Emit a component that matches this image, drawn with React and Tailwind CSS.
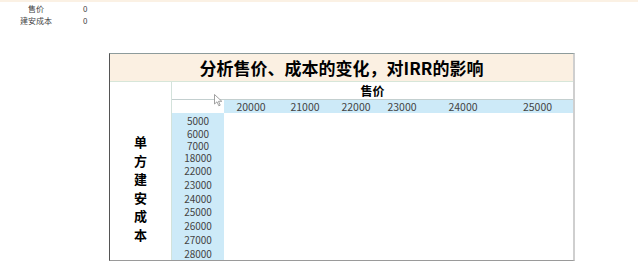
import React from "react";

const colHeads = [
  { v: "20000", w: "w-[54px]" },
  { v: "21000", w: "w-[54px]" },
  { v: "22000", w: "w-[48px]" },
  { v: "23000", w: "w-[44px]" },
  { v: "24000", w: "w-[78px]" },
  { v: "25000", w: "flex-1" },
];

const rowHeads = [
  { v: "5000", h: "h-[14px]" },
  { v: "6000", h: "h-[12px]" },
  { v: "7000", h: "h-[12px]" },
  { v: "18000", h: "h-[12px]" },
  { v: "22000", h: "h-[14px]" },
  { v: "23000", h: "h-[14px]" },
  { v: "24000", h: "h-[14px]" },
  { v: "25000", h: "h-[13px]" },
  { v: "26000", h: "h-[14px]" },
  { v: "27000", h: "h-[14px]" },
  { v: "28000", h: "h-[14px]" },
];

const font = "font-['Noto_Sans_CJK_SC',sans-serif]";

const Cursor = () => (
  <svg
    className="absolute left-[42px] top-[-6px]"
    width="9"
    height="13"
    viewBox="0 0 9 13"
  >
    <path
      d="M0.5 0.5 L0.5 10 L3 7.8 L4.8 11.8 L6.2 11.2 L4.5 7.3 L7.8 7.3 Z"
      fill="#ffffff"
      stroke="#8a8a8a"
      strokeWidth="0.8"
    />
  </svg>
);

const App = () => {
  return (
    <div className={`w-[638px] h-[268px] bg-white border-t-2 border-[#fbf1e4] ${font}`}>
      <div className="pt-[1px] text-[8px] leading-[12px] text-[#444]">
        <div className="flex">
          <span className="w-[52px] text-right pr-[8px]">售价</span>
          <span className="ml-[31px]">0</span>
        </div>
        <div className="flex">
          <span className="w-[52px] text-right">建安成本</span>
          <span className="ml-[31px]">0</span>
        </div>
      </div>

      <div className="ml-[109px] mt-[26px] w-[466px] border-l border-l-[#555] border-t border-t-[#8d9b9b] border-r-2 border-r-[#cfcfcf] border-b border-b-[#9a9a9a]">
        <div className="h-[28px] bg-[#fbf0e2] border-b border-[#d7e6d9] flex items-center justify-center text-[17px] font-bold text-black">
          分析售价、成本的变化，对IRR的影响
        </div>
        <div className="flex">
          <div className="w-[62px] border-r border-[#d3e2db] flex flex-col items-center pt-[51px] text-[13px] leading-[18.5px] font-bold text-black">
            {"单方建安成本".split("").map((c) => (
              <span key={c}>{c}</span>
            ))}
          </div>
          <div className="flex-1 flex flex-col">
            <div className="h-[18px] border-b border-[#c3cfcf] flex items-center justify-center text-[12px] leading-[16px] font-bold text-black">
              售价
            </div>
            <div className="flex h-[13px] text-[10.5px] leading-[13px] text-[#444]">
              <div className="w-[52px] relative">
                <Cursor />
              </div>
              <div className="flex-1 flex bg-[#cdeaf8]">
                {colHeads.map((c) => (
                  <span key={c.v} className={`${c.w} text-center`}>
                    {c.v}
                  </span>
                ))}
              </div>
            </div>
            <div className="flex">
              <div className="w-[52px] bg-[#cdeaf8] flex flex-col text-[10px] leading-[11px] text-[#444]">
                {rowHeads.map((r) => (
                  <div key={r.v} className={`${r.h} flex items-center justify-center`}>
                    {r.v}
                  </div>
                ))}
              </div>
              <div className="flex-1" />
            </div>
          </div>
        </div>
      </div>
    </div>
  );
};

export default App;
